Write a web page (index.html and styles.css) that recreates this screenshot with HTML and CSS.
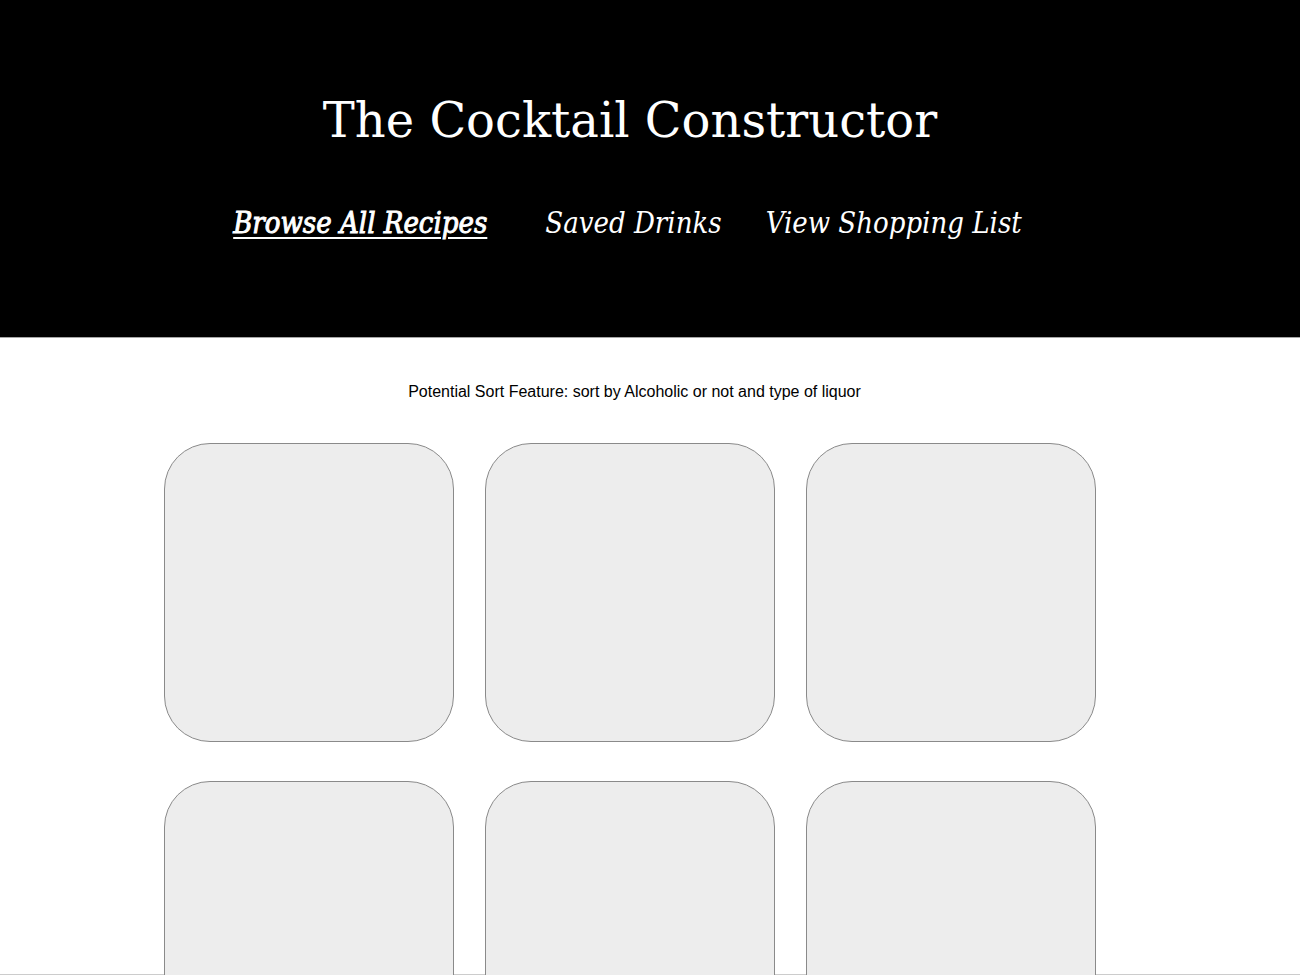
FILE: index.html
```html
<!DOCTYPE html>
<html lang="en">
<head>
<meta charset="utf-8">
<title>The Cocktail Constructor</title>
<link rel="stylesheet" href="styles.css">
</head>
<body>
<header class="site-header">
  <div class="header-inner">
    <h1 class="site-title">The Cocktail Constructor</h1>
    <nav class="site-nav">
      <a class="nav-link nav-link--active" href="#">Browse All Recipes</a>
      <a class="nav-link nav-link--saved" href="#">Saved Drinks</a>
      <a class="nav-link" href="#">View Shopping List</a>
    </nav>
  </div>
</header>
<main class="content">
  <p class="sort-note">Potential Sort Feature: sort by Alcoholic or not and type of liquor</p>
  <section class="card-grid">
    <div class="card"></div>
    <div class="card"></div>
    <div class="card"></div>
    <div class="card"></div>
    <div class="card"></div>
    <div class="card"></div>
  </section>
</main>
</body>
</html>
```
FILE: styles.css
```css
html, body {
  margin: 0;
  padding: 0;
  background: #fff;
}

body {
  font-family: "Liberation Sans", Arial, sans-serif;
  color: #000;
}

.site-header {
  background: #000;
  border-bottom: 1px solid #a6a6a6;
}

.header-inner {
  padding: 90px 40px 94px 0;
  display: flex;
  flex-direction: column;
  align-items: center;
}

.site-title {
  margin: 0;
  font-family: "DejaVu Serif", "Liberation Serif", serif;
  font-weight: normal;
  font-size: 48px;
  line-height: 60px;
  color: #fff;
}

.site-nav {
  margin-top: 53px;
  padding-right: 5px;
  display: flex;
  align-items: baseline;
  justify-content: center;
}

.nav-link {
  font-family: "DejaVu Serif Condensed", "DejaVu Serif", "Liberation Serif", serif;
  font-stretch: condensed;
  font-style: italic;
  font-size: 29px;
  line-height: 40px;
  color: #fff;
  text-decoration: none;
}

.nav-link--active {
  -webkit-text-stroke: 0.9px #fff;
  text-decoration: underline;
  text-underline-offset: 4px;
  text-decoration-thickness: 2px;
}

.nav-link--saved {
  margin: 0 44px 0 58px;
}

.content {
  height: 636px;
  border-bottom: 1px solid #cccccc;
  padding-right: 40px;
}

.sort-note {
  margin: 0;
  padding: 44px 0 0 9px;
  text-align: center;
  font-size: 16px;
  line-height: 20px;
}

.card-grid {
  margin-top: 41px;
  display: grid;
  grid-template-columns: repeat(3, 290px);
  column-gap: 31px;
  row-gap: 39px;
  justify-content: center;
}

.card {
  height: 299px;
  box-sizing: border-box;
  background: #ededed;
  border: 1px solid #8a8a8a;
  border-radius: 46px;
}
```
